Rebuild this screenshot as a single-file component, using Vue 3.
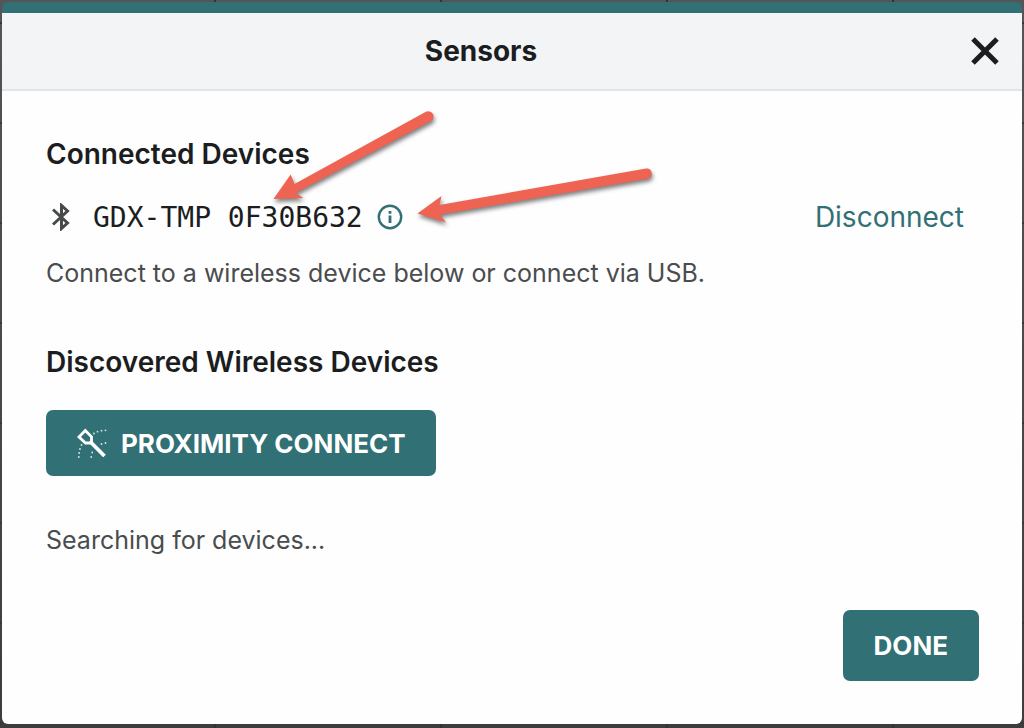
<script setup>
import { ref } from 'vue'

const device = ref({ name: 'GDX-TMP 0F30B632' })
</script>

<template>
  <div class="backdrop">
    <section class="dialog" role="dialog" aria-labelledby="dialog-title">
      <header class="header">
        <h1 id="dialog-title" class="title">Sensors</h1>
        <button class="close" type="button" aria-label="Close">
          <svg width="28" height="28" viewBox="0 0 28 28" fill="none" stroke="#1b1d1f" stroke-width="5">
            <path d="M2 2 26 26M26 2 2 26" />
          </svg>
        </button>
      </header>

      <main class="content">
        <h2 class="heading">Connected Devices</h2>
        <div class="device">
          <svg class="bluetooth" width="18" height="28" viewBox="0 0 18 28" fill="none" stroke="#47494b" stroke-width="3">
            <path d="M1 6.500 15.500 20 9.500 25.500V2.500l6 5.500L1 21.500" />
          </svg>
          <span class="device-name">{{ device.name }}</span>
          <button class="info" type="button" aria-label="Device information">
            <svg width="26" height="26" viewBox="0 0 26 26" fill="none">
              <circle cx="13" cy="13" r="11.200" stroke="#317075" stroke-width="2.400" />
              <path d="M13 11.500v7.500M13 7v2.700" stroke="#317075" stroke-width="2.800" />
            </svg>
          </button>
          <a class="disconnect" href="#">Disconnect</a>
        </div>
        <p class="text">Connect to a wireless device below or connect via USB.</p>

        <h2 class="heading discovered">Discovered Wireless Devices</h2>
        <button class="button proximity" type="button">
          <svg width="30" height="30" viewBox="0 0 30 30" fill="none" stroke="#fff">
            <path d="M2 9 8.300 2.500 14.500 8.800v4.500l-1.700 1.700H8.500Z" stroke-width="2.800" />
            <path d="M13.500 14 27.500 28" stroke-width="3.800" />
            <g stroke="#d9e6e7" stroke-width="1.800" stroke-linecap="round">
              <path d="M17 5.500h.01M20.500 3.700h.01M24.500 2.700h.01M28.500 2.300h.01M24.500 16h.01M28.500 15h.01" />
              <path d="M4.500 17h.01M3 21h.01M2.200 25h.01M1.800 29h.01M15.200 24.500h.01M14.200 29h.01" />
            </g>
          </svg>
          <span>PROXIMITY CONNECT</span>
        </button>
        <p class="text searching">Searching for devices...</p>
      </main>

      <footer class="footer">
        <button class="button done" type="button">DONE</button>
      </footer>

      <svg class="arrows" width="400" height="130" viewBox="260 100 400 130" fill="#ee6352" aria-hidden="true">
        <path d="M273.500 199 290.700 174.500 294.500 184 425.500 112A5.200 5.200 0 0 1 431 121L295.500 193 303.500 198Z" />
        <path d="M417.500 213.500 441.500 196 439.500 205 646 168.500A5.200 5.200 0 0 1 648.500 178.500L440 214.500 446 222.500Z" />
      </svg>
    </section>
  </div>
</template>

<style>
body {
  margin: 0;
}
</style>

<style scoped>
.backdrop {
  box-sizing: border-box;
  display: flex;
  min-height: 100vh;
  padding: 2px 2px 4px;
  background:
    repeating-linear-gradient(90deg, transparent 0 214px, #333 214px 216px, transparent 216px 226px) 0 0 / 226px 100%,
    linear-gradient(transparent 22px, #383838 22px 24px, transparent 24px) 0 0 / 100% 100px,
    linear-gradient(#555, #3d3d3d);
  font-family: Inter, "Liberation Sans", sans-serif;
  color: #1b1d1f;
}

.dialog {
  position: relative;
  display: flex;
  flex: 1;
  flex-direction: column;
  border-top: 11px solid #317075;
  border-radius: 6px;
  background: #fefefe;
  overflow: hidden;
}

.header {
  display: flex;
  align-items: center;
  gap: 11px;
  height: 76px;
  padding-right: 23px;
  border-bottom: 2px solid #e2e4e6;
  background: #f3f4f6;
}

.title {
  flex: 1;
  margin: 0;
  font-size: 28px;
  font-weight: 700;
  line-height: 36px;
  text-align: center;
}

.close,
.info {
  display: flex;
  padding: 0;
  border: 0;
  background: none;
}

.content {
  padding: 45px 58px 0 44px;
}

.heading {
  margin: 0;
  font-size: 28px;
  font-weight: 600;
  line-height: 36px;
}

.device {
  display: flex;
  align-items: center;
  height: 40px;
  margin: 25px 0 20px;
}

.bluetooth {
  margin: 0 23px 0 6px;
}

.device-name {
  margin-right: 14px;
  font-family: "DejaVu Sans Mono", monospace;
  font-size: 28px;
}

.disconnect {
  margin-left: auto;
  color: #317075;
  font-size: 28px;
  text-decoration: none;
}

.text {
  margin: 0;
  color: #4a4c4e;
  font-size: 25px;
  line-height: 32px;
}

.discovered {
  margin: 55px 0 30px;
}

.button {
  display: flex;
  align-items: center;
  border: 0;
  border-radius: 7px;
  background: #317075;
  color: #fff;
  font-family: inherit;
  font-size: 26px;
  font-weight: 700;
}

.proximity {
  gap: 14px;
  height: 66px;
  padding: 0 30px 0 31px;
}

.searching {
  margin-top: 48px;
}

.footer {
  display: flex;
  justify-content: flex-end;
  padding: 54px 43px 43px;
}

.done {
  height: 71px;
  padding: 0 31px;
}

.arrows {
  position: absolute;
  top: 87px;
  left: 258px;
  filter: drop-shadow(1px 3px 2px rgb(0 0 0 / 50%));
  overflow: visible;
  pointer-events: none;
}
</style>
